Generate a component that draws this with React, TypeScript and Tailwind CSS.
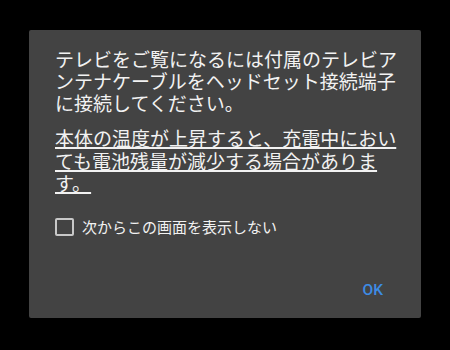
import React from 'react';

const App: React.FC = () => {
    return (
        <div className="w-[450px] h-[350px] bg-black pt-[30px] pl-[29px] font-['Noto_Sans_CJK_JP',sans-serif]">
            {/* Dialog */}
            <div className="w-[392px] h-[288px] bg-[#434343] rounded-[2px] flex flex-col pt-[18px] pl-[26px] pr-[21px] text-[#f2f2f2]">
                <p className="text-[19px] leading-[22px]">
                    テレビをご覧になるには付属のテレビアンテナケーブルをヘッドセット接続端子に接続してください。
                </p>
                <p className="mt-[13px] text-[19px] leading-[22.5px] underline decoration-[1.5px] underline-offset-[1px]">
                    本体の温度が上昇すると、充電中においても電池残量が減少する場合があります。
                </p>

                {/* Checkbox row */}
                <label className="mt-[23px] flex items-center gap-[8px]">
                    <span className="w-[19px] h-[18px] border-2 border-[#c8c8c8] rounded-[2px]"></span>
                    <span className="text-[15px] leading-[18px]">次からこの画面を表示しない</span>
                </label>

                {/* Actions */}
                <div className="mt-auto mb-[20px] flex justify-end pr-[17px]">
                    <button className="font-['Roboto',sans-serif] font-medium text-[15.5px] leading-[16px] text-[#3d8ce6]">OK</button>
                </div>
            </div>
        </div>
    );
};

export default App;
